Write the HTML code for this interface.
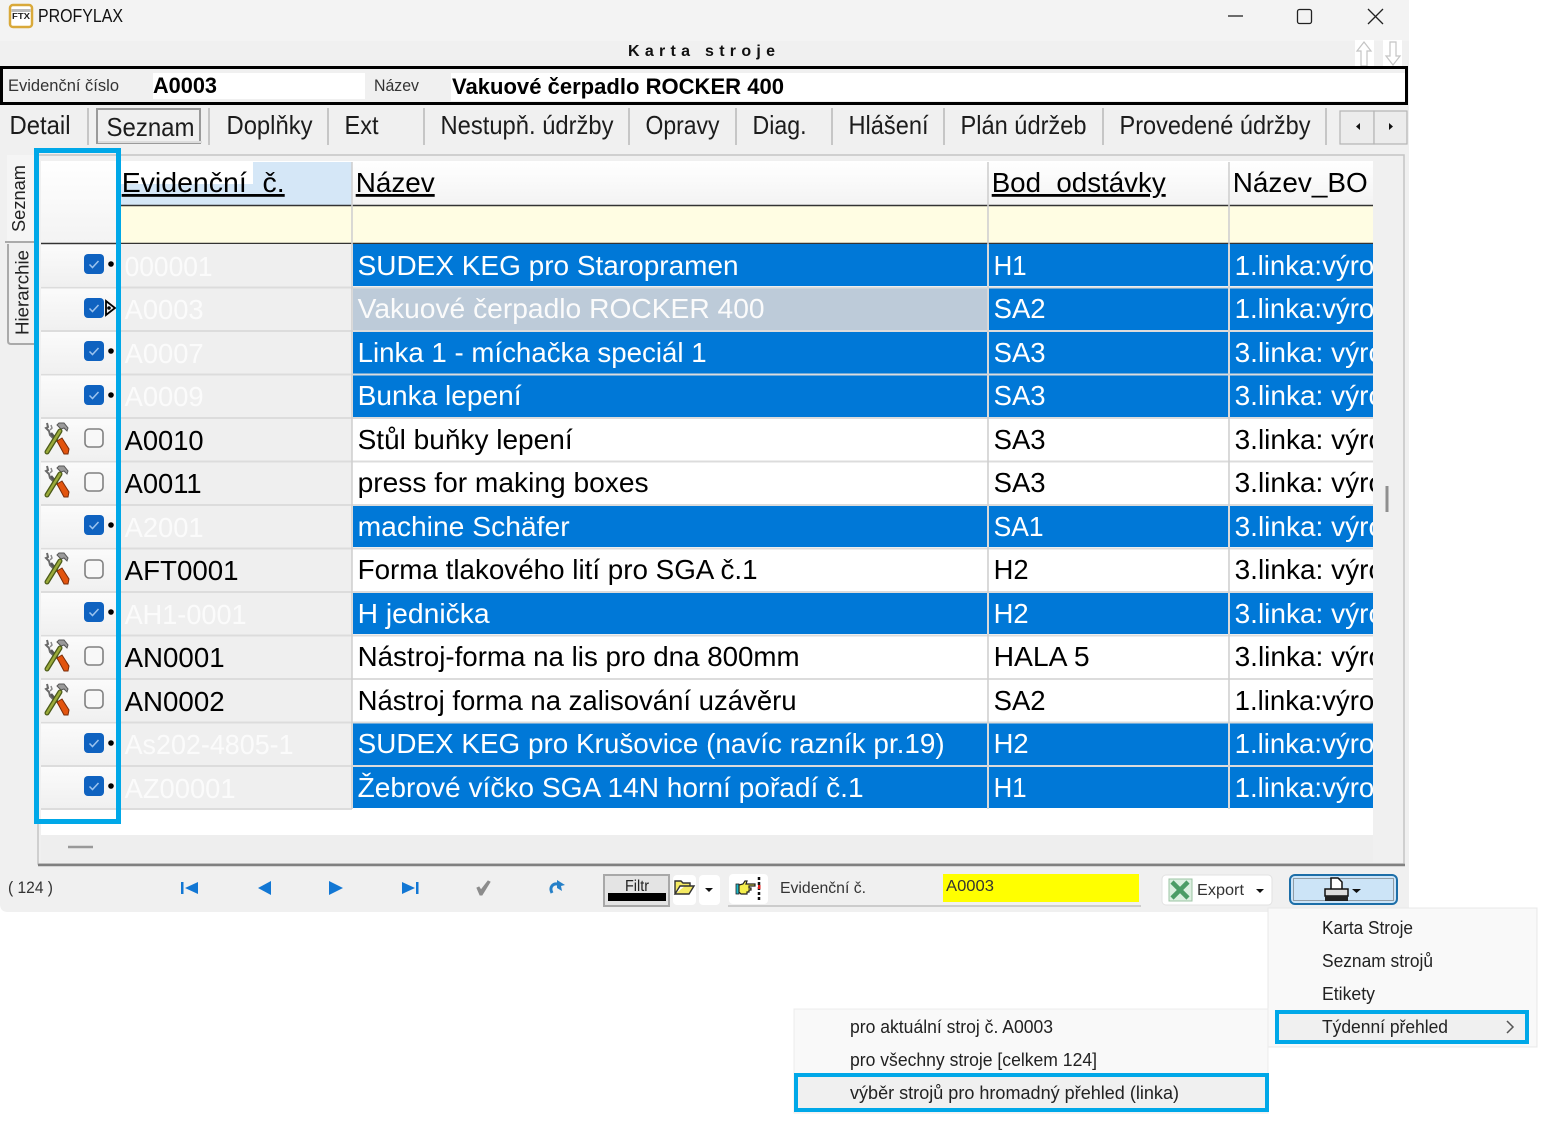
<!DOCTYPE html>
<html><head><meta charset="utf-8"><style>
html,body{margin:0;padding:0;background:#fff;width:1549px;height:1125px;overflow:hidden}
svg{display:block}
text{font-family:"Liberation Sans","DejaVu Sans",sans-serif}
.r{font-size:28px;fill:#000}.w{font-size:28px;fill:#fff}.g{font-size:28px;fill:#fbfbfb}
.t{font-size:26px;fill:#1c1c1c}.m{font-size:18px;fill:#222}.s{font-size:16px;fill:#333}
</style></head><body>
<svg width="1549" height="1125" viewBox="0 0 1549 1125" xmlns="http://www.w3.org/2000/svg">
<defs>
<clipPath id="bo"><rect x="1230" y="160" width="143" height="650"/></clipPath>
<linearGradient id="cell" x1="0" y1="0" x2="0" y2="1"><stop offset="0" stop-color="#fbfbfb"/><stop offset="1" stop-color="#f0f0f0"/></linearGradient>
<linearGradient id="hd" x1="0" y1="0" x2="0" y2="1"><stop offset="0" stop-color="#fff"/><stop offset="1" stop-color="#f3f3f3"/></linearGradient>
<symbol id="tool" viewBox="0 0 26 34" overflow="visible">
<path d="M3 1l1 4 -2 1 3 3 1 4 3 3" fill="none" stroke="#6a6a6a" stroke-width="2"/>
<path d="M7 3l1 3 -2 2" fill="none" stroke="#8a8a8a" stroke-width="1.500"/>
<path d="M7 11l9 11" stroke="#555" stroke-width="2.500"/>
<path d="M13 3l2 -2 5 0 4 5 -1 3 -3 -3 -3 1z" fill="#9a9a9a" stroke="#555" stroke-width="1"/>
<path d="M16 9L3 30" stroke="#4b5a18" stroke-width="5" stroke-linecap="round"/>
<path d="M16 9L3 30" stroke="#9aaa3a" stroke-width="2.500" stroke-linecap="round"/>
<path d="M13 19l5 -3 7 11 -1 5 -4 0z" fill="#e2540e" stroke="#7a2c08" stroke-width="1"/>
</symbol>
<symbol id="on" viewBox="0 0 20 20"><rect x="0" y="0" width="20" height="20" rx="4" fill="#0f62c0"/><path d="M5.500 10.500l3 3 6 -6.500" fill="none" stroke="#9cc3ee" stroke-width="1.500"/></symbol>
<symbol id="off" viewBox="0 0 20 20"><rect x="1" y="1" width="18" height="18" rx="4" fill="#f8f8f8" stroke="#808080" stroke-width="1.600"/></symbol>
</defs>

<!-- window -->
<path d="M0 0H1409V912H8Q0 912 0 904Z" fill="#f0f0f0"/>
<rect x="0" y="0" width="1409" height="41" fill="#f3f3f3"/>
<rect x="10" y="5" width="22" height="22" rx="3" fill="#fff" stroke="#d9a93a" stroke-width="2.500"/>
<rect x="11.500" y="9" width="19" height="3" fill="#bbb"/>
<text x="12" y="19" font-size="8" font-weight="700" fill="#222" textLength="18" lengthAdjust="spacingAndGlyphs">FTX</text>
<text x="38" y="22" font-size="18" fill="#111" textLength="85" lengthAdjust="spacingAndGlyphs">PROFYLAX</text>
<path d="M1228 16H1243" stroke="#222" stroke-width="1.300"/>
<rect x="1297.500" y="9.500" width="14" height="14" rx="2" fill="none" stroke="#222" stroke-width="1.300"/>
<path d="M1368 9L1383 24M1383 9L1368 24" stroke="#222" stroke-width="1.300"/>

<text x="628" y="56" font-size="16" font-weight="700" fill="#111" textLength="147" lengthAdjust="spacing">Karta stroje</text>
<rect x="1355" y="40" width="19" height="26" fill="#fff"/><rect x="1383" y="40" width="19" height="26" fill="#fff"/>
<path d="M1364 42l-7 9h4v15h6V51h4z" fill="#fff" stroke="#c4c4c4" stroke-width="1.200"/>
<path d="M1393 65l-7 -9h4V42h6v14h4z" fill="#fff" stroke="#c4c4c4" stroke-width="1.200"/>

<!-- header fields -->
<rect x="1.500" y="67.500" width="1405" height="36" fill="#f0f0f0" stroke="#000" stroke-width="3"/>
<rect x="153" y="73" width="212" height="26" fill="#fff"/>
<rect x="451" y="73" width="954" height="28" fill="#fff"/>
<text x="8" y="91" font-size="17" fill="#333" textLength="111" lengthAdjust="spacingAndGlyphs">Evidenční číslo</text>
<text x="153" y="93" font-size="22" font-weight="700" fill="#000" textLength="64" lengthAdjust="spacingAndGlyphs">A0003</text>
<text x="374" y="91" font-size="17" fill="#333" textLength="45" lengthAdjust="spacingAndGlyphs">Název</text>
<text x="452" y="94" font-size="22" font-weight="700" fill="#000" textLength="332" lengthAdjust="spacingAndGlyphs">Vakuové čerpadlo ROCKER 400</text>

<!-- tabs -->
<rect x="97" y="109" width="103" height="34" fill="#f0f0f0" stroke="#9a9a9a" stroke-width="2"/>
<rect x="98" y="141" width="104" height="2" fill="#ddd"/>
<g transform="translate(-0.5,-1)">
<text class="t" x="10" y="135" textLength="61" lengthAdjust="spacingAndGlyphs">Detail</text>
<text class="t" x="107" y="137" textLength="88" lengthAdjust="spacingAndGlyphs">Seznam</text>
<text class="t" x="227" y="135" textLength="86" lengthAdjust="spacingAndGlyphs">Doplňky</text>
<text class="t" x="345" y="135" textLength="34" lengthAdjust="spacingAndGlyphs">Ext</text>
<text class="t" x="441" y="135" textLength="173" lengthAdjust="spacingAndGlyphs">Nestupň. údržby</text>
<text class="t" x="646" y="135" textLength="74" lengthAdjust="spacingAndGlyphs">Opravy</text>
<text class="t" x="753" y="135" textLength="54" lengthAdjust="spacingAndGlyphs">Diag.</text>
<text class="t" x="849" y="135" textLength="80" lengthAdjust="spacingAndGlyphs">Hlášení</text>
<text class="t" x="961" y="135" textLength="126" lengthAdjust="spacingAndGlyphs">Plán údržeb</text>
<text class="t" x="1120" y="135" textLength="191" lengthAdjust="spacingAndGlyphs">Provedené údržby</text>
</g>
<path d="M88 108V145M209 108V145M328 108V145M424 108V145M629 108V145M736 108V145M832 108V145M944 108V145M1103 108V145M1326 108V145" stroke="#b8b8b8" stroke-width="1.500"/>
<rect x="1340" y="111" width="34" height="33" fill="#ececec" stroke="#b4b4b4" stroke-width="1.200"/>
<rect x="1374" y="111" width="33" height="33" fill="#ececec" stroke="#b4b4b4" stroke-width="1.200"/>
<path d="M1360 123v7l-4 -3.500zM1389 123v7l4 -3.500z" fill="#111"/>

<!-- side tabs -->
<path d="M7 155H36V243H7Z" fill="#f5f5f5"/>
<path d="M5 242H36" stroke="#aaa" stroke-width="2"/>
<path d="M8 244V341Q8 344 11 344H36" fill="none" stroke="#aaa" stroke-width="2"/>
<text transform="translate(25,232) rotate(-90)" font-size="18" fill="#222" textLength="67" lengthAdjust="spacingAndGlyphs">Seznam</text>
<text transform="translate(28.500,335) rotate(-90)" font-size="18" fill="#222" textLength="85" lengthAdjust="spacingAndGlyphs">Hierarchie</text>

<!-- grid frame -->
<rect x="38" y="155" width="1366" height="709" fill="#f0f0f0" stroke="#c4c4c4" stroke-width="1.500"/>
<path d="M38 865H1405" stroke="#808080" stroke-width="2.500"/>
<rect x="41" y="161" width="1332" height="674" fill="#fff"/>
<rect x="41" y="835" width="1332" height="27" fill="#eeeeee"/>
<rect x="1373" y="161" width="23" height="701" fill="#f0f0f0"/>
<path d="M68 847H93" stroke="#999" stroke-width="2.500"/>

<!-- header -->
<rect x="41" y="161" width="80" height="82" fill="url(#hd)"/>
<rect x="121" y="162" width="231" height="43" fill="#d5e7f7"/>
<rect x="121" y="162" width="132" height="22" fill="#fff"/>
<rect x="352" y="162" width="1021" height="43" fill="url(#hd)"/>
<rect x="121" y="206" width="1252" height="37" fill="#fffde3"/>
<path d="M121 205.500H1373M41 243.500H1373" stroke="#333" stroke-width="1.600"/>
<g transform="translate(-0.3,-1)">
<text class="r" x="122" y="193" textLength="163" lengthAdjust="spacingAndGlyphs" text-decoration="underline" xml:space="preserve">Evidenční  č.</text>
<text class="r" x="356" y="193" textLength="79" lengthAdjust="spacingAndGlyphs" text-decoration="underline">Název</text>
<text class="r" x="992" y="193" textLength="174" lengthAdjust="spacingAndGlyphs" text-decoration="underline" xml:space="preserve">Bod  odstávky</text>
<text class="r" x="1233" y="193" textLength="135" lengthAdjust="spacingAndGlyphs">Název_BO</text>
</g>

<!-- row backgrounds -->
<g fill="url(#cell)">
<rect x="41" y="245" width="80" height="41"/><rect x="41" y="288" width="80" height="42"/><rect x="41" y="332" width="80" height="41"/><rect x="41" y="375" width="80" height="42"/><rect x="41" y="419" width="80" height="41"/><rect x="41" y="462" width="80" height="42"/><rect x="41" y="506" width="80" height="41"/><rect x="41" y="549" width="80" height="42"/><rect x="41" y="593" width="80" height="41"/><rect x="41" y="636" width="80" height="42"/><rect x="41" y="680" width="80" height="41"/><rect x="41" y="723" width="80" height="42"/><rect x="41" y="767" width="80" height="41"/>
</g>
<rect x="121" y="244" width="231" height="565" fill="#efefef"/>
<g fill="#0078d7">
<rect x="353" y="244" width="634" height="42"/><rect x="989" y="244" width="239" height="42"/><rect x="1230" y="244" width="143" height="42"/>
<rect x="989" y="288" width="239" height="42"/><rect x="1230" y="288" width="143" height="42"/>
<rect x="353" y="331" width="634" height="43"/><rect x="989" y="331" width="239" height="43"/><rect x="1230" y="331" width="143" height="43"/>
<rect x="353" y="375" width="634" height="42"/><rect x="989" y="375" width="239" height="42"/><rect x="1230" y="375" width="143" height="42"/>
<rect x="353" y="505" width="634" height="42"/><rect x="989" y="505" width="239" height="42"/><rect x="1230" y="505" width="143" height="42"/>
<rect x="353" y="592" width="634" height="42"/><rect x="989" y="592" width="239" height="42"/><rect x="1230" y="592" width="143" height="42"/>
<rect x="353" y="723" width="634" height="42"/><rect x="989" y="723" width="239" height="42"/><rect x="1230" y="723" width="143" height="42"/>
<rect x="353" y="766" width="634" height="42"/><rect x="989" y="766" width="239" height="42"/><rect x="1230" y="766" width="143" height="42"/>
</g>
<rect x="353" y="288" width="634" height="42" fill="#bdcbd9"/>
<g stroke="#dcdcdc" stroke-width="2">
<path d="M41 287.500H1373M41 331H1373M41 374.500H1373M41 418H1373M41 461.500H1373M41 505H1373M41 548.500H1373M41 592H1373M41 635.500H1373M41 679H1373M41 722.500H1373M41 766H1373M41 809H352"/>
</g>
<path d="M352 162V809M988 162V809M1229 162V809" stroke="#d0d0d0" stroke-width="1.600"/>
<path d="M1387 486V512" stroke="#8f8f8f" stroke-width="3"/>

<!-- indicators -->
<g>
<use href="#on" x="84" y="254" width="20" height="20"/>
<use href="#on" x="84" y="298" width="20" height="20"/>
<use href="#on" x="84" y="341" width="20" height="20"/>
<use href="#on" x="84" y="385" width="20" height="20"/>
<use href="#off" x="84" y="428" width="20" height="20"/>
<use href="#off" x="84" y="472" width="20" height="20"/>
<use href="#on" x="84" y="515" width="20" height="20"/>
<use href="#off" x="84" y="559" width="20" height="20"/>
<use href="#on" x="84" y="602" width="20" height="20"/>
<use href="#off" x="84" y="646" width="20" height="20"/>
<use href="#off" x="84" y="689" width="20" height="20"/>
<use href="#on" x="84" y="733" width="20" height="20"/>
<use href="#on" x="84" y="776" width="20" height="20"/>
</g>
<g fill="#000">
<circle cx="111" cy="264" r="2.800"/><circle cx="111" cy="351" r="2.800"/><circle cx="111" cy="395" r="2.800"/><circle cx="111" cy="525" r="2.800"/><circle cx="111" cy="612" r="2.800"/><circle cx="111" cy="743" r="2.800"/><circle cx="111" cy="786" r="2.800"/>
</g>
<path d="M106 301V315L115 308Z" fill="none" stroke="#000" stroke-width="1.800"/>
<circle cx="109" cy="308" r="1.800" fill="#000"/>
<use href="#tool" x="44" y="422" width="26" height="34"/>
<use href="#tool" x="44" y="465" width="26" height="34"/>
<use href="#tool" x="44" y="552" width="26" height="34"/>
<use href="#tool" x="44" y="639" width="26" height="34"/>
<use href="#tool" x="44" y="683" width="26" height="34"/>

<g transform="translate(-0.4,-1)">
<!-- ids -->
<text class="g" x="125" y="277" textLength="88" lengthAdjust="spacingAndGlyphs">000001</text>
<text class="g" x="125" y="320" textLength="79" lengthAdjust="spacingAndGlyphs">A0003</text>
<text class="g" x="125" y="364" textLength="79" lengthAdjust="spacingAndGlyphs">A0007</text>
<text class="g" x="125" y="407" textLength="79" lengthAdjust="spacingAndGlyphs">A0009</text>
<text class="r" x="125" y="451" textLength="79" lengthAdjust="spacingAndGlyphs">A0010</text>
<text class="r" x="125" y="494" textLength="77" lengthAdjust="spacingAndGlyphs">A0011</text>
<text class="g" x="125" y="538" textLength="79" lengthAdjust="spacingAndGlyphs">A2001</text>
<text class="r" x="125" y="581" textLength="114" lengthAdjust="spacingAndGlyphs">AFT0001</text>
<text class="g" x="125" y="625" textLength="122" lengthAdjust="spacingAndGlyphs">AH1-0001</text>
<text class="r" x="125" y="668" textLength="100" lengthAdjust="spacingAndGlyphs">AN0001</text>
<text class="r" x="125" y="712" textLength="100" lengthAdjust="spacingAndGlyphs">AN0002</text>
<text class="g" x="125" y="755" textLength="169" lengthAdjust="spacingAndGlyphs">As202-4805-1</text>
<text class="g" x="125" y="799" textLength="111" lengthAdjust="spacingAndGlyphs">AZ00001</text>

<!-- names -->
<text class="w" x="358" y="276" textLength="381" lengthAdjust="spacingAndGlyphs">SUDEX KEG pro Staropramen</text>
<text class="g" x="358" y="319" textLength="407" lengthAdjust="spacingAndGlyphs">Vakuové čerpadlo ROCKER 400</text>
<text class="w" x="358" y="363" textLength="349" lengthAdjust="spacingAndGlyphs">Linka 1 - míchačka speciál 1</text>
<text class="w" x="358" y="406" textLength="164" lengthAdjust="spacingAndGlyphs">Bunka lepení</text>
<text class="r" x="358" y="450" textLength="215" lengthAdjust="spacingAndGlyphs">Stůl buňky lepení</text>
<text class="r" x="358" y="493" textLength="291" lengthAdjust="spacingAndGlyphs">press for making boxes</text>
<text class="w" x="358" y="537" textLength="212" lengthAdjust="spacingAndGlyphs">machine Schäfer</text>
<text class="r" x="358" y="580" textLength="400" lengthAdjust="spacingAndGlyphs">Forma tlakového lití pro SGA č.1</text>
<text class="w" x="358" y="624" textLength="132" lengthAdjust="spacingAndGlyphs">H jednička</text>
<text class="r" x="358" y="667" textLength="442" lengthAdjust="spacingAndGlyphs">Nástroj-forma na lis pro dna 800mm</text>
<text class="r" x="358" y="711" textLength="439" lengthAdjust="spacingAndGlyphs">Nástroj forma na zalisování uzávěru</text>
<text class="w" x="358" y="754" textLength="587" lengthAdjust="spacingAndGlyphs">SUDEX KEG pro Krušovice (navíc razník pr.19)</text>
<text class="w" x="358" y="798" textLength="506" lengthAdjust="spacingAndGlyphs">Žebrové víčko SGA 14N horní pořadí č.1</text>

<!-- bod -->
<text class="w" x="994" y="276" textLength="33" lengthAdjust="spacingAndGlyphs">H1</text>
<text class="w" x="994" y="319" textLength="52" lengthAdjust="spacingAndGlyphs">SA2</text>
<text class="w" x="994" y="363" textLength="52" lengthAdjust="spacingAndGlyphs">SA3</text>
<text class="w" x="994" y="406" textLength="52" lengthAdjust="spacingAndGlyphs">SA3</text>
<text class="r" x="994" y="450" textLength="52" lengthAdjust="spacingAndGlyphs">SA3</text>
<text class="r" x="994" y="493" textLength="52" lengthAdjust="spacingAndGlyphs">SA3</text>
<text class="w" x="994" y="537" textLength="50" lengthAdjust="spacingAndGlyphs">SA1</text>
<text class="r" x="994" y="580" textLength="35" lengthAdjust="spacingAndGlyphs">H2</text>
<text class="w" x="994" y="624" textLength="35" lengthAdjust="spacingAndGlyphs">H2</text>
<text class="r" x="994" y="667" textLength="96" lengthAdjust="spacingAndGlyphs">HALA 5</text>
<text class="r" x="994" y="711" textLength="52" lengthAdjust="spacingAndGlyphs">SA2</text>
<text class="w" x="994" y="754" textLength="35" lengthAdjust="spacingAndGlyphs">H2</text>
<text class="w" x="994" y="798" textLength="33" lengthAdjust="spacingAndGlyphs">H1</text>
</g>

<!-- nazev BO -->
<g clip-path="url(#bo)">
<g transform="translate(-0.4,-1)">
<text class="w" x="1235" y="276" textLength="155" lengthAdjust="spacingAndGlyphs">1.linka:výrob</text>
<text class="w" x="1235" y="319" textLength="155" lengthAdjust="spacingAndGlyphs">1.linka:výrob</text>
<text class="w" x="1235" y="363" textLength="165" lengthAdjust="spacingAndGlyphs">3.linka: výrob</text>
<text class="w" x="1235" y="406" textLength="165" lengthAdjust="spacingAndGlyphs">3.linka: výrob</text>
<text class="r" x="1235" y="450" textLength="165" lengthAdjust="spacingAndGlyphs">3.linka: výrob</text>
<text class="r" x="1235" y="493" textLength="165" lengthAdjust="spacingAndGlyphs">3.linka: výrob</text>
<text class="w" x="1235" y="537" textLength="165" lengthAdjust="spacingAndGlyphs">3.linka: výrob</text>
<text class="r" x="1235" y="580" textLength="165" lengthAdjust="spacingAndGlyphs">3.linka: výrob</text>
<text class="w" x="1235" y="624" textLength="165" lengthAdjust="spacingAndGlyphs">3.linka: výrob</text>
<text class="r" x="1235" y="667" textLength="165" lengthAdjust="spacingAndGlyphs">3.linka: výrob</text>
<text class="r" x="1235" y="711" textLength="155" lengthAdjust="spacingAndGlyphs">1.linka:výrob</text>
<text class="w" x="1235" y="754" textLength="155" lengthAdjust="spacingAndGlyphs">1.linka:výrob</text>
<text class="w" x="1235" y="798" textLength="155" lengthAdjust="spacingAndGlyphs">1.linka:výrob</text>
</g>
</g>

<!-- toolbar -->
<text x="8" y="893" font-size="17" fill="#333" textLength="45" lengthAdjust="spacingAndGlyphs">( 124 )</text>
<g fill="#1277d4">
<path d="M181 882h2.500v12H181zM198 882v12l-13 -6z"/>
<path d="M271 881v14l-13 -7z"/>
<path d="M329 881v14l14 -7z"/>
<path d="M402 882v12l13 -6zM416 882h2.500v12H416z"/>
</g>
<path d="M477 888l2 -1 2 3 7 -9 2 1 -8 13 -2 0z" fill="#8c8c8c" stroke="#8c8c8c" stroke-width="1"/>
<path d="M552 893c-3 -6 1 -10 6 -9" fill="none" stroke="#2680c8" stroke-width="3"/>
<path d="M557 880l8 5 -4 1 1 5 -5 -3z" fill="#2680c8"/>
<rect x="604" y="875" width="65" height="31" fill="#e4e4e4" stroke="#a8a8a8" stroke-width="2"/>
<text x="625" y="891" font-size="16" fill="#222" textLength="24" lengthAdjust="spacingAndGlyphs">Filtr</text>
<rect x="608" y="893" width="58" height="8" fill="#000"/>
<rect x="673" y="875" width="23" height="30" rx="4" fill="#fff"/>
<path d="M675 894V881h6l2 2h7v3h-10l-5 8h14l5 -8h-9" fill="#f5ea63" stroke="#333" stroke-width="1.400"/>
<rect x="699" y="875" width="21" height="30" rx="4" fill="#fff"/>
<path d="M705 888h8l-4 4z" fill="#111"/>
<rect x="729" y="874" width="39" height="30" rx="4" fill="#fff"/>
<rect x="736" y="884" width="3" height="10" fill="#20b8c8" stroke="#222" stroke-width=".8"/>
<path d="M739 885l4 -1 2 -3h2l-1 3h9v2h-6v2h2v2h-2v2h-2v2h-6l-2 -2z" fill="#f4ee4c" stroke="#222" stroke-width="1.200"/>
<path d="M759 877V901" stroke="#111" stroke-width="2.500" stroke-dasharray="3 2"/>
<rect x="758" y="885" width="2.500" height="4" fill="#e02020"/>
<path d="M728 906H1141" stroke="#c0c0c0" stroke-width="1.500"/>
<text class="s" x="780" y="893" textLength="86" lengthAdjust="spacingAndGlyphs">Evidenční č.</text>
<rect x="943" y="874" width="196" height="28" fill="#ffff00"/>
<text x="946" y="891" font-size="16" fill="#333" textLength="48" lengthAdjust="spacingAndGlyphs">A0003</text>
<rect x="1162" y="875" width="110" height="30" rx="4" fill="#fff" stroke="#e2e2e2"/>
<rect x="1169" y="879" width="23" height="22" fill="#dcefe0" stroke="#9cc4a4"/>
<path d="M1172 882l16 16M1188 882l-16 16" stroke="#4c9c66" stroke-width="4.500"/>
<text class="s" x="1197" y="895" textLength="47" lengthAdjust="spacingAndGlyphs">Export</text>
<path d="M1256 889h8l-4 4z" fill="#111"/>
<rect x="1290" y="875" width="107" height="29" rx="5" fill="#cce4f7" stroke="#1c6ea8" stroke-width="2"/>
<rect x="1293.500" y="878.500" width="100" height="22" fill="none" stroke="#555" stroke-width="1" stroke-dasharray="1 1"/>
<path d="M1331 878h7l4 4v8h-11z" fill="#fff" stroke="#111" stroke-width="1.500"/>
<rect x="1325" y="889" width="23" height="7" fill="#ddd" stroke="#111" stroke-width="1.500"/>
<rect x="1325" y="896" width="23" height="5" fill="#222"/>
<path d="M1352 889h9l-4.500 4z" fill="#111"/>

<!-- menu 1 -->
<rect x="1268" y="908" width="269" height="139" fill="#f9f9f9" stroke="#e8e8e8"/>
<rect x="1278" y="1013" width="248" height="28" fill="#f0f0f0"/>
<text class="m" x="1322" y="934" textLength="91" lengthAdjust="spacingAndGlyphs">Karta Stroje</text>
<text class="m" x="1322" y="967" textLength="111" lengthAdjust="spacingAndGlyphs">Seznam strojů</text>
<text class="m" x="1322" y="1000" textLength="53" lengthAdjust="spacingAndGlyphs">Etikety</text>
<text class="m" x="1322" y="1033" textLength="126" lengthAdjust="spacingAndGlyphs">Týdenní přehled</text>
<path d="M1507 1021l6 6 -6 6" fill="none" stroke="#555" stroke-width="1.500"/>
<rect x="1277" y="1012" width="250" height="30" fill="none" stroke="#00a8e8" stroke-width="4"/>

<!-- menu 2 -->
<rect x="794" y="1009" width="474" height="104" fill="#f9f9f9" stroke="#ececec"/>
<rect x="798" y="1077" width="467" height="31" fill="#f0f0f0"/>
<text class="m" x="850" y="1033" textLength="203" lengthAdjust="spacingAndGlyphs">pro aktuální stroj č. A0003</text>
<text class="m" x="850" y="1066" textLength="247" lengthAdjust="spacingAndGlyphs">pro všechny stroje [celkem 124]</text>
<text class="m" x="850" y="1099" textLength="329" lengthAdjust="spacingAndGlyphs">výběr strojů pro hromadný přehled (linka)</text>
<rect x="796" y="1075" width="471" height="35" fill="none" stroke="#00a8e8" stroke-width="4"/>

<!-- highlight -->
<rect x="36.500" y="150.500" width="82" height="671" fill="none" stroke="#00a8e8" stroke-width="5"/>
</svg>
</body></html>
